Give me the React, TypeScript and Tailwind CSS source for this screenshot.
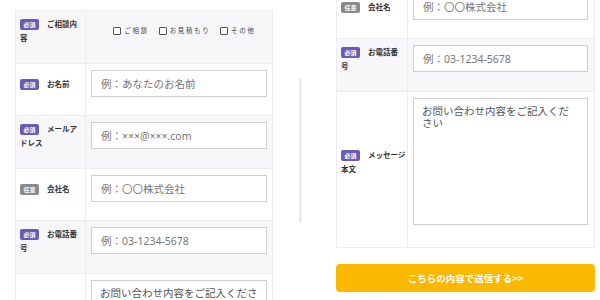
import type { ReactNode } from 'react';

const font = "font-['Noto_Sans_CJK_JP','Noto_Sans',sans-serif]";

function Badge({ required }: { required: boolean }) {
  return (
    <span
      className={`mr-[8px] inline-block h-[11px] w-[19px] rounded-[2px] text-center align-middle text-[6px] leading-[11px] font-bold text-white ${
        required ? 'bg-[#6a5bb0]' : 'bg-[#8a8a8a]'
      }`}
    >
      {required ? '必須' : '任意'}
    </span>
  );
}

interface RowProps {
  required?: boolean;
  lines: string[];
  gray?: boolean;
  labelWidth: string;
  padRight: string;
  pb?: string;
  children: ReactNode;
}

function Row({ required = true, lines, gray, labelWidth, padRight, pb = 'pb-[18px]', children }: RowProps) {
  return (
    <div className={`flex border-b border-[#ededed] ${gray ? 'bg-[#f7f7f9]' : 'bg-white'}`}>
      <div className={`${labelWidth} flex shrink-0 items-center border-r border-[#ededed] pl-[4px] pt-[6px] ${pb}`}>
        <p className="whitespace-nowrap text-[7.5px] leading-[14px] font-bold text-[#333]">
          <Badge required={required} />
          {lines.map((l, i) => (
            <span key={i}>
              {i > 0 && <br />}
              {l}
            </span>
          ))}
        </p>
      </div>
      <div className={`flex-1 pl-[5px] ${padRight} pt-[6px] ${pb}`}>{children}</div>
    </div>
  );
}

function TextInput({ placeholder }: { placeholder: string }) {
  return (
    <input
      readOnly
      placeholder={placeholder}
      className="block h-[27px] w-full border border-[#cfcfcf] bg-white px-[9px] font-['Noto_Sans','Noto_Sans_CJK_JP',sans-serif] text-[10.5px] text-[#555] placeholder:text-[#777] outline-none"
    />
  );
}

function Check({ label }: { label: string }) {
  return (
    <span className="flex items-center">
      <span className="mr-[3px] inline-block h-[8px] w-[8px] rounded-[1px] border border-[#555] bg-white" />
      <span className="text-[6.5px] tracking-[1.6px] text-[#444]">{label}</span>
    </span>
  );
}

function MessageBox({ height }: { height: string }) {
  return (
    <textarea
      readOnly
      placeholder="お問い合わせ内容をご記入ください"
      className={`block ${height} w-full resize-none border border-[#cfcfcf] bg-white px-[8px] py-[6px] text-[10.5px] leading-[12px] text-[#555] placeholder:text-[#555] outline-none`}
    />
  );
}

export default function App() {
  return (
    <div className={`flex h-[300px] w-[600px] items-start overflow-hidden bg-white ${font}`}>
      {/* left view */}
      <div className="ml-[15px] mt-[10px] w-[258px] shrink-0 border-x border-t border-[#ededed]">
        <Row lines={['ご相談内', '容']} gray labelWidth="w-[70px]" padRight="pr-[6px]">
          <div className="flex h-[27px] items-center justify-center gap-[10px] pl-[12px]">
            <Check label="ご相談" />
            <Check label="お見積もり" />
            <Check label="その他" />
          </div>
        </Row>
        <Row lines={['お名前']} labelWidth="w-[70px]" padRight="pr-[5px]">
          <TextInput placeholder="例：あなたのお名前" />
        </Row>
        <Row lines={['メールア', 'ドレス']} gray labelWidth="w-[70px]" padRight="pr-[5px]">
          <TextInput placeholder="例：×××@×××.com" />
        </Row>
        <Row required={false} lines={['会社名']} labelWidth="w-[70px]" padRight="pr-[5px]">
          <TextInput placeholder="例：〇〇株式会社" />
        </Row>
        <Row lines={['お電話番', '号']} gray labelWidth="w-[70px]" padRight="pr-[5px]">
          <TextInput placeholder="例：03-1234-5678" />
        </Row>
        <Row lines={['メッセージ', '本文']} labelWidth="w-[70px]" padRight="pr-[5px]" pb="pb-[22px]">
          <MessageBox height="h-[127px]" />
        </Row>
      </div>

      {/* scrollbar */}
      <div className="ml-[26px] mt-[78px] h-[144px] w-[3px] shrink-0 bg-[#ececec]" />

      {/* right view */}
      <div className="-mt-[13px] ml-[34px] w-[259px] shrink-0">
        <div className="border-x border-[#ededed]">
          <Row required={false} lines={['会社名']} labelWidth="w-[71px]" padRight="pr-[6px]">
            <TextInput placeholder="例：〇〇株式会社" />
          </Row>
          <Row lines={['お電話番', '号']} gray labelWidth="w-[71px]" padRight="pr-[6px]">
            <TextInput placeholder="例：03-1234-5678" />
          </Row>
          <Row lines={['メッセージ', '本文']} labelWidth="w-[71px]" padRight="pr-[6px]" pb="pb-[22px]">
            <MessageBox height="h-[127px]" />
          </Row>
        </div>
        <button className="mt-[16px] flex h-[28px] w-full items-center justify-center rounded-[4px] bg-[#fbb800] text-[9.5px] font-bold text-white">
          こちらの内容で送信する&gt;&gt;
        </button>
      </div>
    </div>
  );
}
